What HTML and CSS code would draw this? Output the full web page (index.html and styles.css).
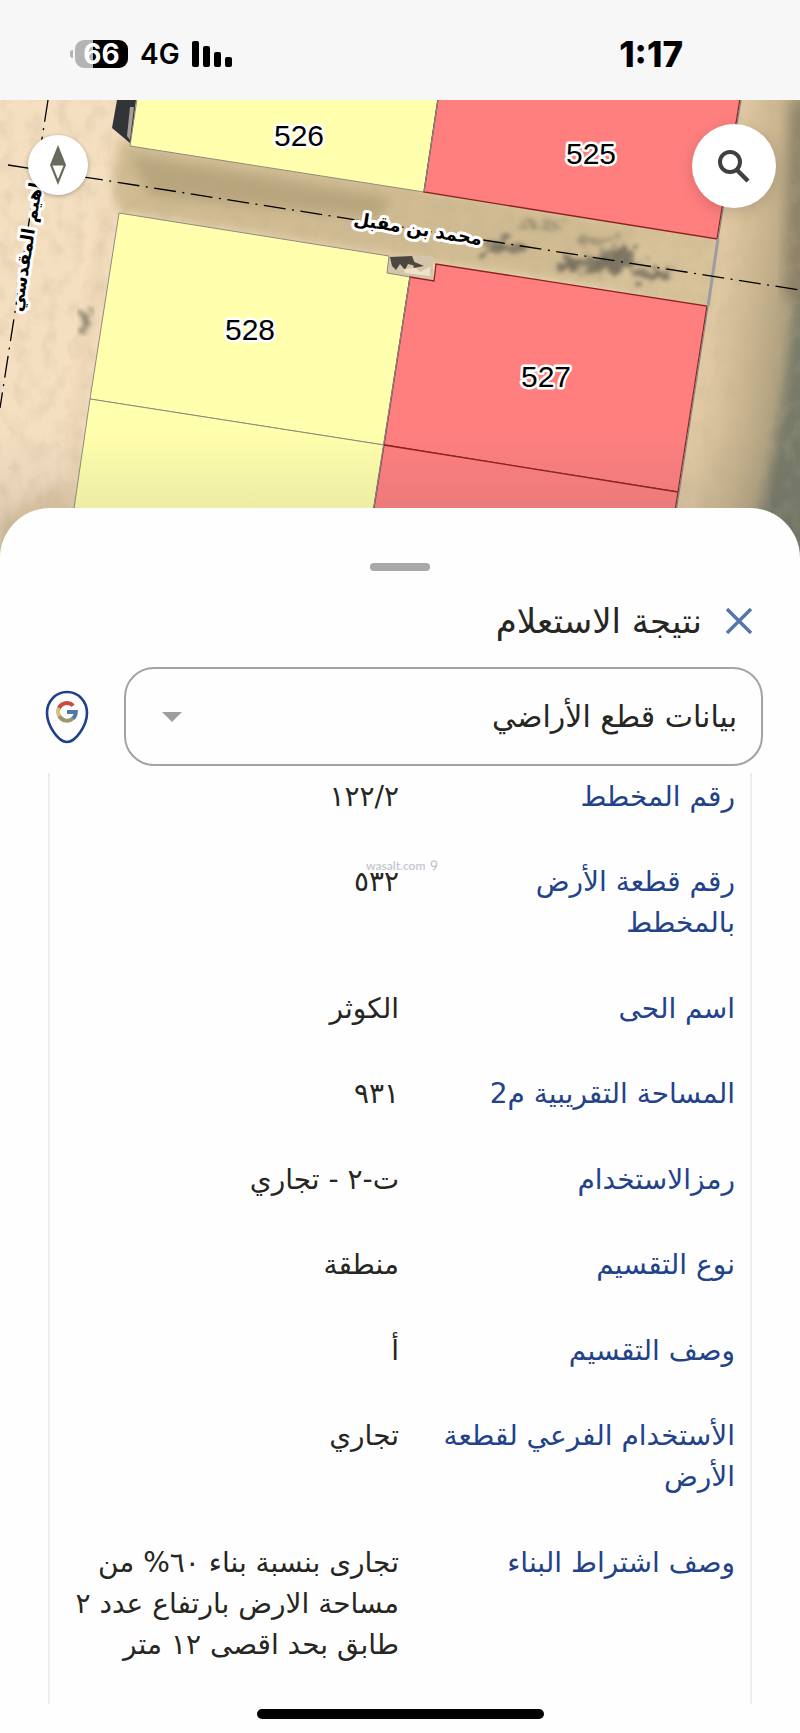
FILE: index.html
```html
<!DOCTYPE html>
<html lang="ar" dir="rtl">
<head>
<meta charset="utf-8">
<meta name="viewport" content="width=device-width, initial-scale=1">
<title>نتيجة الاستعلام</title>
<link rel="stylesheet" href="styles.css">
</head>
<body>
<header class="status">
  <time class="clock">1:17</time>
  <div class="indicators">
    <svg class="signal" viewBox="0 0 40 26" aria-hidden="true"><rect x="0" y="0" width="7" height="26" rx="2"/><rect x="11" y="5" width="7" height="21" rx="2"/><rect x="22" y="11" width="7" height="15" rx="2"/><rect x="33" y="16" width="7" height="10" rx="2"/></svg>
    <span class="network">4G</span>
    <div class="battery"><span class="charge">66</span><i class="cap"></i></div>
  </div>
</header>

<main>
<section class="map" aria-label="الخريطة">
  <svg class="tiles" viewBox="0 100 800 460" preserveAspectRatio="xMidYMin slice">
    <defs>
      <linearGradient id="east" gradientUnits="userSpaceOnUse" x1="660" x2="800" y1="300" y2="318">
        <stop offset="0" stop-color="#e6cfa9"/><stop offset=".4" stop-color="#e0c9a2"/><stop offset=".68" stop-color="#c9b48e"/><stop offset="1" stop-color="#a5987a"/>
      </linearGradient>
      <linearGradient id="shade" x1="0" x2="0" y1="0" y2="1">
        <stop offset="0" stop-color="#555" stop-opacity="0"/><stop offset="1" stop-color="#555" stop-opacity=".18"/>
      </linearGradient>
      <filter id="soft" x="-20%" y="-20%" width="140%" height="140%"><feGaussianBlur stdDeviation="6"/></filter>
      <filter id="blotch" x="-20%" y="-50%" width="140%" height="200%">
        <feTurbulence type="fractalNoise" baseFrequency=".09 .13" numOctaves="4" seed="4" result="n"/>
        <feDisplacementMap in="SourceGraphic" in2="n" scale="30" xChannelSelector="R" yChannelSelector="G"/>
        <feGaussianBlur stdDeviation="2"/>
      </filter>
      <filter id="grain" x="0" y="0" width="100%" height="100%">
        <feTurbulence type="fractalNoise" baseFrequency=".07 .05" numOctaves="4" seed="9"/>
        <feColorMatrix values="0 0 0 0 .5  0 0 0 0 .42  0 0 0 0 .28  0 1.2 0 0 -.5"/>
      </filter>
    </defs>
    <rect x="0" y="100" width="800" height="460" fill="#f5dfc1"/>
    <path d="M0 520L60 480 90 560H0z" fill="#e2caa5" filter="url(#soft)"/>
    <path d="M640 100H800V560H640z" fill="url(#east)"/>
    <path d="M118 138L424 185 717 236 708 306 436 264 119 213 112 190z" fill="#d0bb92" filter="url(#soft)"/>
    <path d="M130 155L390 198 380 218 150 196z" fill="#a8976f" opacity=".6" filter="url(#soft)"/>
    <path d="M640 230L717 242 706 300 600 285z" fill="#dcc69e" opacity=".7" filter="url(#soft)"/>
    <g fill="#5f5b50" opacity=".75" filter="url(#blotch)">
      <ellipse cx="505" cy="246" rx="24" ry="5"/><ellipse cx="540" cy="224" rx="26" ry="4" opacity=".6"/>
      <ellipse cx="595" cy="264" rx="36" ry="9"/><ellipse cx="625" cy="256" rx="16" ry="9"/><ellipse cx="652" cy="274" rx="22" ry="6"/><ellipse cx="600" cy="240" rx="20" ry="4" opacity=".6"/>
    </g>
    <path d="M804 270L796 300 784 390 770 470 758 520 790 570 820 570 820 270z" fill="#777a69" filter="url(#soft)"/>
    <path d="M790 100H810V300H784z" fill="#857b64" opacity=".8" filter="url(#soft)"/>
    <path d="M108 206L80 400 66 560" fill="none" stroke="#c8ad84" stroke-width="6" opacity=".4" filter="url(#soft)"/>
    <path d="M92 310L90 328 80 328 84 314z" fill="#6f6d57" opacity=".8" filter="url(#blotch)"/>
    <rect x="0" y="100" width="800" height="460" filter="url(#grain)" opacity=".45"/>
    <path d="M117 100H136L131 144 124 138 112 128z" fill="#333437"/>
    <path d="M130 107H134L130 140 127 136z" fill="#a5a098"/>
    <path d="M389 256L432 256 434 280 387 273z" fill="#d4c5aa"/>
    <path d="M390 257L412 256 416 266 408 264 405 270 400 264 396 270 392 266zM412 261L424 266 414 268z" fill="#4b473f"/>
    <path d="M404 269L416 268 420 272 430 267 430 276 405 273z" fill="#f0e2c8"/>

    <g fill="#ffffad" stroke="#8f8a7c" stroke-width="1">
      <path d="M137 99H438L424 192 130 146z"/>
      <path d="M119 213L389 256 387 273 410 277 384 445 90 399z"/>
      <path d="M90 399L384 445 364 570H65z"/>
    </g>
    <g fill="#ff7f7f" stroke="#8e2020" stroke-width="1.3">
      <path d="M438 99H740L717 239 424 192z"/>
      <path d="M410 277L434 281 436 264 707 306 678 492 384 445z"/>
      <path d="M384 445L678 492 666 570H364z"/>
    </g>
    <path d="M438 100L424 192M410 277L364 570M741 100L718 239M708 306L667 570" fill="none" stroke="#858585" stroke-width="1.3"/>
    <path d="M718 239L708 306" stroke="#9b9da3" stroke-width="3"/>
    <g fill="none" stroke="#000" stroke-width="1.3" stroke-dasharray="22 6.5 2 6.5">
      <path d="M8 165L800 290"/><path d="M48 100L0 408"/>
    </g>
    <rect x="0" y="430" width="800" height="130" fill="url(#shade)"/>
    <g class="plots">
      <text x="299" y="146">526</text><text x="591" y="164">525</text>
      <text x="250" y="340">528</text><text x="546" y="387">527</text>
    </g>
    <g class="streets">
      <text transform="translate(417 235) rotate(9)">محمد بن مقبل</text>
      <text transform="translate(34 236) rotate(-81)">ابراهيم المقدسي</text>
    </g>
  </svg>
  <button class="round search" type="button" aria-label="بحث">
    <svg viewBox="0 0 32 33" width="32" height="33" aria-hidden="true"><circle cx="12" cy="12" r="10" fill="none" stroke="#404040" stroke-width="4"/><path d="M19 20L30 31" stroke="#404040" stroke-width="4.500"/></svg>
  </button>
  <button class="round compass" type="button" aria-label="اتجاه الشمال">
    <svg viewBox="0 0 16 40" width="16" height="40" aria-hidden="true"><path d="M8 0L16 20 8 40 0 20z" fill="#69695c"/><path d="M2.500 20.500H13.500L8 34z" fill="#fff"/></svg>
  </button>
</section>

<section class="sheet">
  <div class="handle"></div>
  <div class="heading">
    <button class="close" type="button" aria-label="إغلاق"><svg viewBox="0 0 26 26" width="26" height="26" aria-hidden="true"><path d="M1 1L25 25M25 1L1 25" stroke="#5575ad" stroke-width="3.400"/></svg></button>
    <h1>نتيجة الاستعلام</h1>
  </div>
  <div class="picker">
    <div class="field">
      <select aria-label="نوع البيانات"><option>بيانات قطع الأراضي</option></select>
      <svg class="caret" viewBox="0 0 20 10" width="20" height="10" aria-hidden="true"><path d="M0 0H20L10 10z" fill="#9e9e9e"/></svg>
    </div>
    <a class="pin" href="#" aria-label="فتح في خرائط جوجل">
      <svg viewBox="0 0 44 54" width="44" height="54" aria-hidden="true">
        <path d="M22 2C10 2 2 12 2 23C2 35 13 52 22 52S42 35 42 23C42 12 34 2 22 2z" fill="#fff" stroke="#1f418b" stroke-width="2.600"/>
        <g fill="none" stroke-width="4">
          <path d="M13.700 18.700A8.800 8.800 0 0 1 28.200 15.600" stroke="#ca4b43"/>
          <path d="M14 17.900A8.800 8.800 0 0 0 14.200 26" stroke="#d3c083"/>
          <path d="M14.200 26A8.800 8.800 0 0 0 28.200 28.200" stroke="#9c956e"/>
          <path d="M22 22H30.800A8.800 8.800 0 0 1 28 28.400" stroke="#5276ad"/>
        </g>
      </svg>
    </a>
  </div>
  <div class="details">
    <table>
      <tr><th scope="row">رقم المخطط</th><td>١٢٢/٢</td></tr>
      <tr><th scope="row">رقم قطعة الأرض بالمخطط</th><td>٥٣٢</td></tr>
      <tr><th scope="row">اسم الحى</th><td>الكوثر</td></tr>
      <tr><th scope="row">المساحة التقريبية م2</th><td>٩٣١</td></tr>
      <tr><th scope="row">رمزالاستخدام</th><td>ت-٢ - تجاري</td></tr>
      <tr><th scope="row">نوع التقسيم</th><td>منطقة</td></tr>
      <tr><th scope="row">وصف التقسيم</th><td>أ</td></tr>
      <tr><th scope="row">الأستخدام الفرعي لقطعة الأرض</th><td>تجاري</td></tr>
      <tr><th scope="row">وصف اشتراط البناء</th><td>تجارى بنسبة بناء ٦٠% من مساحة الارض بارتفاع عدد ٢ طابق بحد اقصى ١٢ متر</td></tr>
    </table>
    <div class="watermark" dir="ltr">wasalt.com
      <svg viewBox="0 0 8 11" width="8" height="11" aria-hidden="true"><path d="M6.500 5A2.800 2.800 0 1 1 6.800 3.500C6.800 6 5.500 8.500 3 10.300" fill="none" stroke="#c3c6d0" stroke-width="1.400"/></svg>
    </div>
  </div>
  <div class="home"></div>
</section>
</main>
</body>
</html>
```
FILE: styles.css
```css
* { box-sizing: border-box; }
body { margin: 0; background: #fefefe; color: #262622; font-family: "DejaVu Sans", sans-serif; }
button { border: 0; padding: 0; background: none; display: grid; place-items: center; }

.status { display: flex; justify-content: space-between; align-items: center; height: 100px; padding: 8px 117px 0 70px; background: #f7f7f7; color: #000; font-family: Inter, sans-serif; }
.clock { font-size: 35px; font-weight: 800; }
.indicators { display: flex; align-items: center; gap: 12px; }
.signal { width: 40px; height: 26px; }
.network { font-size: 28px; font-weight: 600; }
.battery { display: flex; align-items: center; gap: 2px; }
.charge { width: 53px; height: 28px; border-radius: 9px; background: linear-gradient(90deg, #b4b4b4 34%, #000 34%); color: #fff; font-size: 28px; font-weight: 700; line-height: 28px; text-align: center; }
.cap { width: 3px; height: 8px; border-radius: 3px 0 0 3px; background: #b4b4b4; }

.map { position: relative; height: 460px; overflow: hidden; }
.tiles { display: block; width: 100%; height: 100%; }
.plots { font: 30px "Liberation Sans", sans-serif; direction: ltr; text-anchor: middle; paint-order: stroke; stroke: #fff; stroke-width: 5px; stroke-linejoin: round; }
.streets { font: 700 18px "DejaVu Sans", sans-serif; direction: rtl; text-anchor: middle; paint-order: stroke; stroke: #fff; stroke-width: 6px; stroke-linejoin: round; }
.round { position: absolute; border-radius: 50%; background: #fff; }
.search { top: 24px; right: 24px; width: 84px; height: 84px; box-shadow: 0 4px 16px rgba(0, 0, 0, .15); }
.compass { top: 35px; left: 28px; width: 60px; height: 60px; box-shadow: 0 1px 4px rgba(0, 0, 0, .3); }

.sheet { position: relative; margin-top: -52px; padding: 55px 0 15px; border-radius: 50px 50px 0 0; background: #fefefe; }
.handle { width: 60px; height: 8px; margin: 0 auto; border-radius: 4px; background: #a9a9a7; }
.heading { display: flex; align-items: center; gap: 24px; height: 96px; padding: 4px 48px 0; }
h1 { margin: 0; font-size: 34px; font-weight: 400; line-height: 40px; }
.picker { display: flex; align-items: center; gap: 35px; padding: 0 37px 0 45px; }
.field { position: relative; flex: 1; }
select { display: block; width: 100%; height: 99px; padding: 0 24px; border: 2px solid #a3a3a3; border-radius: 30px; background: transparent; color: #262622; font: 30px/60px "DejaVu Sans", sans-serif; appearance: none; }
.caret { position: absolute; left: 38px; top: 45px; }
.pin { display: block; height: 54px; }
.details { position: relative; margin: 7px 48px 0; padding-top: 3px; border: solid #ededed; border-width: 0 2px; }
table { width: 100%; border-collapse: collapse; table-layout: fixed; }
th, td { padding: 0 15px 44px 24px; font-size: 28px; font-weight: 400; line-height: 41px; text-align: right; vertical-align: top; }
th { color: #22428a; }
td { padding-right: 1px; padding-left: 17px; }
tr:nth-child(even) > * { padding-bottom: 45px; }
tr:last-child > * { padding-bottom: 39px; }
.watermark { position: absolute; top: 85px; left: 316px; display: flex; align-items: center; gap: 5px; color: #c3c6d0; font: 600 12px Lato, sans-serif; }
.home { width: 287px; height: 10px; margin: 5px auto 0; border-radius: 5px; background: #000; }
```
